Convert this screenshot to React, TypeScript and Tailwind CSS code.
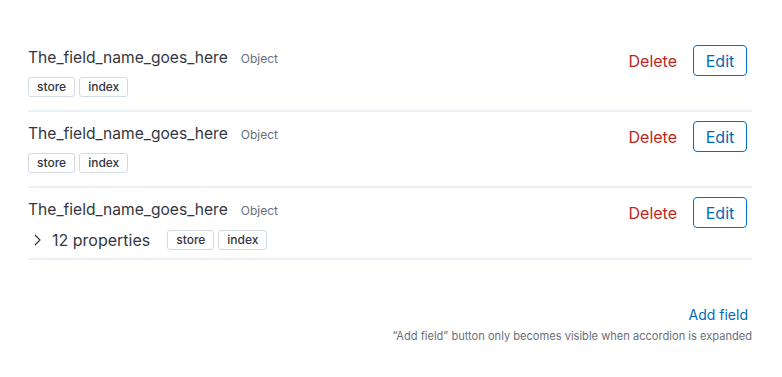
import React from 'react';

interface FieldRowProps {
    name: string;
    type: string;
    tags: string[];
    properties?: number;
}

const Badge: React.FC<{ label: string }> = ({ label }) => (
    <span className="inline-flex items-center h-[20px] px-[8px] border border-[#d3dae6] rounded-[3px] bg-white text-[12px] font-medium leading-none text-[#343741]">
        {label}
    </span>
);

const FieldRow: React.FC<FieldRowProps> = ({ name, type, tags, properties }) => {
    return (
        <div className="flex justify-between border-b-2 border-[#eceff5] pt-[8px]" style={{ paddingBottom: properties ? 8 : 13 }}>
            <div className="flex flex-col">
                <div className="flex items-center gap-[13px] h-[24px] mt-[2px]">
                    <span className="text-[15.6px] text-[#343741] leading-6">{name}</span>
                    <span className="text-[12px] text-[#69707d] pt-[1px]">{type}</span>
                </div>
                {properties ? (
                    <div className="flex items-center mt-[8px] h-[20px]">
                        <svg width="16" height="16" viewBox="0 0 16 16" className="ml-[1px] mr-[7px]">
                            <path d="M6 3l5 5-5 5" fill="none" stroke="#343741" strokeWidth="1.2" />
                        </svg>
                        <span className="text-[16px] text-[#343741] mr-[17px]">{properties} properties</span>
                        <div className="flex gap-[4px]">
                            {tags.map(t => <Badge key={t} label={t} />)}
                        </div>
                    </div>
                ) : (
                    <div className="flex gap-[4px] mt-[7px]">
                        {tags.map(t => <Badge key={t} label={t} />)}
                    </div>
                )}
            </div>
            <div className="flex items-start gap-[16px] pt-[1px] pr-[5px]">
                <button className="h-[32px] text-[16px] text-[#bd271e]">Delete</button>
                <button className="h-[31px] w-[54px] border border-[#0071c2] rounded-[4px] text-[16px] text-[#006bb8]">Edit</button>
            </div>
        </div>
    );
};

export default function App() {
    return (
        <div className="w-[782px] h-[377px] bg-white pl-[28px] pr-[30px] pt-[36px]" style={{ fontFamily: 'Inter, "Noto Sans", sans-serif' }}>
            <FieldRow name="The_field_name_goes_here" type="Object" tags={['store', 'index']} />
            <FieldRow name="The_field_name_goes_here" type="Object" tags={['store', 'index']} />
            <FieldRow name="The_field_name_goes_here" type="Object" tags={['store', 'index']} properties={12} />
            <div className="flex flex-col items-end mt-[44px]">
                <button className="text-[14px] text-[#006bb8] mr-[4px]">Add field</button>
                <p className="text-[11.1px] text-[#69707d] mt-[3px]">“Add field” button only becomes visible when accordion is expanded</p>
            </div>
        </div>
    );
}
